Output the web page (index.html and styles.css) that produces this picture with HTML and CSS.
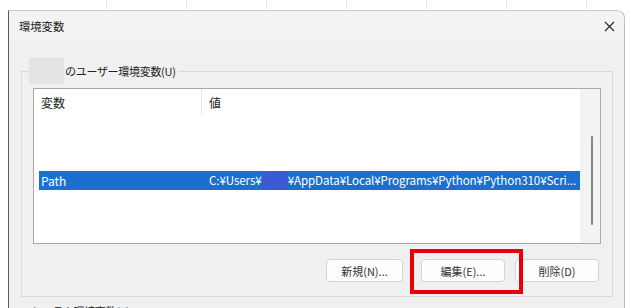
FILE: index.html
```html
<!DOCTYPE html>
<html lang="ja">
<head>
    <meta charset="UTF-8">
    <title>環境変数</title>
    <link rel="stylesheet" href="styles.css">
</head>
<body>
    <div class="desk">
        <div class="dialog">
            <div class="titlebar">
                <span class="title">環境変数</span>
                <svg class="close" width="11" height="11" viewBox="0 0 11 11">
                    <path d="M1 1 L10 10 M10 1 L1 10" stroke="#2b2b2b" stroke-width="1.2" fill="none"/>
                </svg>
            </div>

            <div class="content">
                <fieldset class="group">
                    <legend><span class="mask"></span><span class="legend-text">のユーザー環境変数(U)</span></legend>

                    <div class="listbox">
                        <div class="list-main">
                            <div class="list-head">
                                <div class="head-cell first">変数</div>
                                <div class="head-cell">値</div>
                            </div>
                            <div class="row"></div>
                            <div class="row"></div>
                            <div class="row"></div>
                            <div class="row selected">
                                <div class="cell name">Path</div>
                                <div class="cell value">C:¥Users¥<span class="blur"></span>¥AppData¥Local¥Programs¥Python¥Python310¥Scri...</div>
                            </div>
                        </div>
                        <div class="scrollbar">
                            <div class="thumb"></div>
                        </div>
                    </div>

                    <div class="button-row">
                        <button class="btn new-btn">新規(N)...</button>
                        <span class="edit-wrap">
                            <button class="btn edit-btn">編集(E)...</button>
                            <span class="highlight"></span>
                        </span>
                        <button class="btn delete-btn">削除(D)</button>
                    </div>
                </fieldset>

                <fieldset class="group system">
                    <legend><span class="legend-text">システム環境変数(S)</span></legend>
                </fieldset>
            </div>
        </div>
    </div>
</body>
</html>
```

FILE: styles.css
```css
body {
    margin: 0;
    font-family: "Noto Sans CJK JP", "Noto Sans", sans-serif;
    font-size: 12px;
    color: #1f1f1f;
}
.desk {
    height: 308px;
    overflow: hidden;
    padding: 10px 0 0 8px;
    box-sizing: border-box;
    background-color: #fff;
    background-image:
        repeating-linear-gradient(90deg, transparent 0 79px, #e8e8e8 79px 80px);
    background-position: 27px 0;
}
.dialog {
    width: 617px;
    height: 320px;
    box-sizing: border-box;
    border-left: 1px solid #5a5a5a;
    border-top: 1px solid #c9c9c9;
    border-right: 1px solid #bcbcbc;
    border-top-right-radius: 8px;
    background: #f0f0f0;
}
.titlebar {
    height: 30px;
    display: flex;
    align-items: center;
    justify-content: space-between;
    padding: 0 9px 0 10px;
    background: #f3f3f3;
    border-top-right-radius: 8px;
}
.title {
    font-size: 11.3px;
    color: #1a1a1a;
}
.content {
    padding: 17px 11px 0 12px;
}
.group {
    margin: 0;
    padding: 4px 11px 14px 11px;
    border: 1px solid #dadada;
}
.group legend {
    padding: 0;
    margin-left: -4px;
    height: 26px;
    display: flex;
    align-items: center;
}
.mask {
    display: inline-block;
    width: 35px;
    height: 26px;
    background: #e4e4e4;
    margin-right: 1px;
}
.legend-text {
    font-size: 11px;
    letter-spacing: -0.3px;
    color: #222;
    padding-right: 2px;
}
.listbox {
    height: 156px;
    box-sizing: border-box;
    border: 1px solid #a9a9a9;
    background: #fff;
    display: flex;
}
.list-main {
    flex: 1;
    overflow: hidden;
}
.list-head {
    display: grid;
    grid-template-columns: 168px 1fr;
    height: 25px;
}
.head-cell {
    padding-left: 7px;
    line-height: 27px;
    color: #222;
}
.head-cell.first {
    border-right: 1px solid #e6e6e6;
}
.row {
    height: 19px;
}
.row.selected {
    margin-left: 5px;
    display: grid;
    grid-template-columns: 163px 1fr;
    background: #1b6fcf;
    color: #fff;
    line-height: 19px;
}
.cell {
    white-space: nowrap;
    overflow: hidden;
}
.cell.name {
    padding-left: 2px;
}
.cell.value {
    padding-left: 7px;
    font-size: 11.6px;
    letter-spacing: -0.1px;
}
.blur {
    display: inline-block;
    width: 26px;
    height: 17px;
    vertical-align: -4px;
    background: #3a5ad6;
}
.scrollbar {
    width: 20px;
    background: #f3f3f3;
}
.thumb {
    width: 2px;
    height: 89px;
    margin: 47px 0 0 11px;
    border-radius: 1px;
    background: #858585;
}
.button-row {
    display: flex;
    justify-content: flex-end;
    align-items: center;
    margin-top: 15px;
    padding-right: 2px;
}
.btn {
    height: 23px;
    padding: 0;
    font-family: inherit;
    font-size: 11px;
    color: #333;
    background: #fdfdfd;
    border: 1px solid #d3d3d3;
    border-radius: 4px;
}
.new-btn {
    width: 77px;
}
.edit-wrap {
    position: relative;
    display: flex;
    margin-left: 18px;
}
.edit-btn {
    width: 84px;
}
.delete-btn {
    width: 84px;
    margin-left: 10px;
}
.highlight {
    position: absolute;
    left: -11px;
    top: -10px;
    width: 113px;
    height: 45px;
    box-sizing: border-box;
    border: 4px solid #e8000b;
}
.group.system {
    margin-top: 1px;
    border-color: transparent;
}
.group.system legend {
    margin-left: -2px;
}
```
